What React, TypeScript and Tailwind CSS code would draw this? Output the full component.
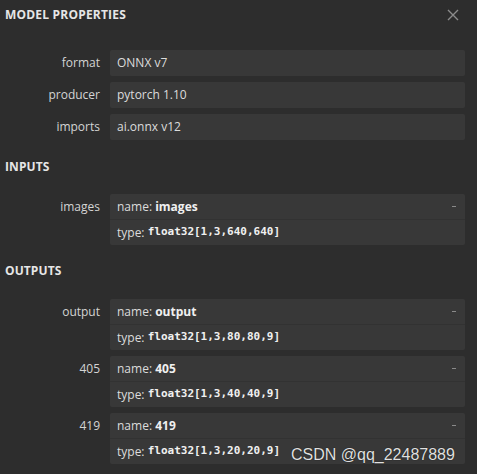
import React from 'react';

const sans = { fontFamily: '"Open Sans", "Noto Sans", sans-serif' };

function Heading({ children }: { children: React.ReactNode }) {
  return (
    <div className="h-[20px] flex items-center px-[5px] text-[12px] font-bold text-[#e6e6e6] tracking-[0.1px]">
      {children}
    </div>
  );
}

function Row({ label, children }: { label: string; children: React.ReactNode }) {
  return (
    <div className="flex items-start">
      <div className="w-[100px] shrink-0 text-right text-[12px] text-[#d4d4d4] leading-[26px]">
        {label}
      </div>
      <div className="ml-[10px] w-[355px]">{children}</div>
    </div>
  );
}

function Plain({ value }: { value: string }) {
  return (
    <div className="h-[26px] bg-[#383838] rounded-[2px] px-[7px] flex items-center text-[12px] text-[#dcdcdc]">
      {value}
    </div>
  );
}

function Tensor({ name, type }: { name: string; type: string }) {
  return (
    <div className="bg-[#383838] rounded-[2px] text-[12px] text-[#dcdcdc]">
      <div className="h-[26px] flex items-center px-[7px] border-b border-[#323232]">
        <span>name:&nbsp;</span>
        <span className="font-bold text-[#f0f0f0]">{name}</span>
        <span className="ml-auto mr-[2px] w-[4px] h-[1px] bg-[#8a8a8a]" />
      </div>
      <div className="h-[25px] flex items-center px-[7px]">
        <span>type:&nbsp;</span>
        <span
          className="font-bold text-[11px] text-[#f0f0f0]"
          style={{ fontFamily: '"DejaVu Sans Mono", "Liberation Mono", monospace' }}
        >
          {type}
        </span>
      </div>
    </div>
  );
}

export default function App() {
  return (
    <div className="relative w-[477px] h-[474px] bg-[#2d2d2d] overflow-hidden" style={sans}>
      <div className="h-[30px] flex items-center justify-between px-[5px]">
        <div className="text-[12px] font-bold text-[#e6e6e6] tracking-[0.2px]">MODEL PROPERTIES</div>
        <svg width="12" height="12" viewBox="0 0 12 12" className="mr-[13px] mt-[-1px]">
          <path d="M1 1 L11 11 M11 1 L1 11" stroke="#8c8c8c" strokeWidth="1.4" />
        </svg>
      </div>

      <div className="mt-[20px] flex flex-col gap-[6px]">
        <Row label="format"><Plain value="ONNX v7" /></Row>
        <Row label="producer"><Plain value="pytorch 1.10" /></Row>
        <Row label="imports"><Plain value="ai.onnx v12" /></Row>
      </div>

      <div className="mt-[17px]">
        <Heading>INPUTS</Heading>
      </div>
      <div className="mt-[17px] flex flex-col gap-[6px]">
        <Row label="images"><Tensor name="images" type="float32[1,3,640,640]" /></Row>
      </div>

      <div className="mt-[16px]">
        <Heading>OUTPUTS</Heading>
      </div>
      <div className="mt-[18px] flex flex-col gap-[6px]">
        <Row label="output"><Tensor name="output" type="float32[1,3,80,80,9]" /></Row>
        <Row label="405"><Tensor name="405" type="float32[1,3,40,40,9]" /></Row>
        <Row label="419"><Tensor name="419" type="float32[1,3,20,20,9]" /></Row>
      </div>

      <div
        className="absolute left-[291px] top-[443px] text-[16px] text-[#e0e0e0] [text-shadow:0_0_1px_#000]"
        style={{ fontFamily: '"Liberation Sans", Arial, sans-serif' }}
      >
        CSDN @qq_22487889
      </div>
    </div>
  );
}
